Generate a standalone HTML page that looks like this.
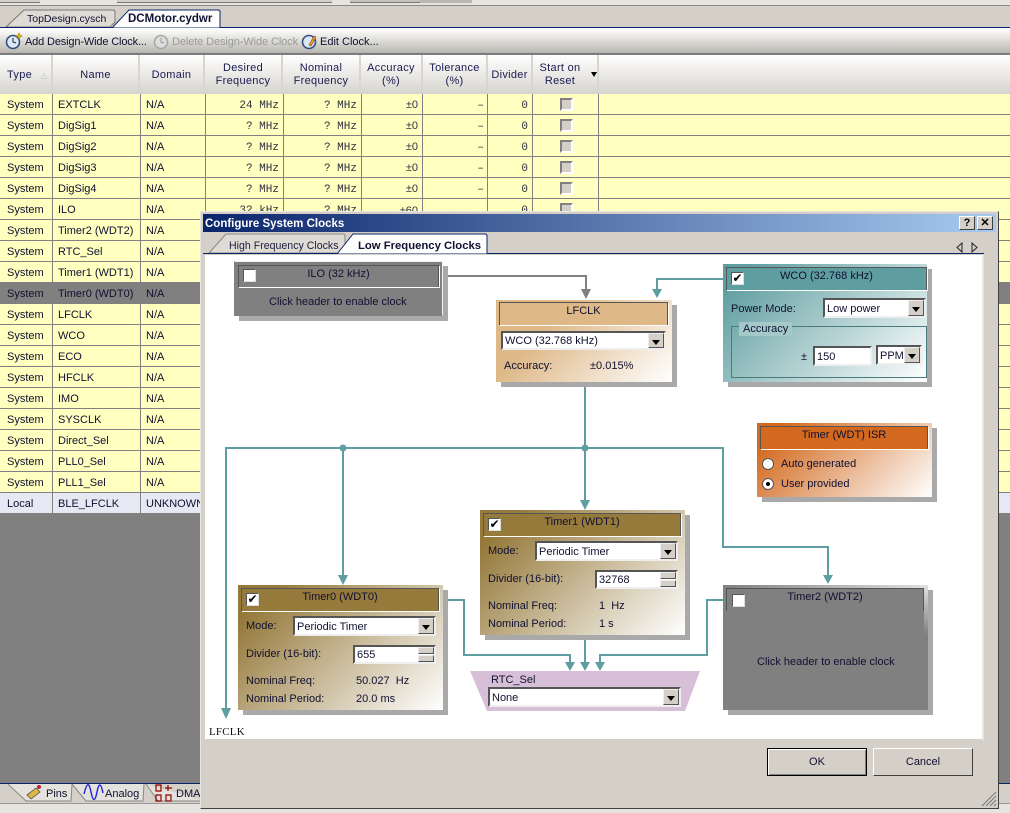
<!DOCTYPE html>
<html><head><meta charset="utf-8"><title>Clocks</title>
<style>
html,body{margin:0;padding:0}
body{width:1010px;height:813px;overflow:hidden;position:relative;background:#808080;font:11px/14px "Liberation Sans",sans-serif;color:#101030}
div,span{position:absolute;box-sizing:border-box;white-space:nowrap}
.r{left:0;width:1010px;height:21px;background:#ffffc0;border-bottom:1px solid #808080}
.t{line-height:14px;margin-top:1px}
.m{font:11px/14px "Liberation Mono",monospace;color:#303040;top:5px;text-align:right}
.hd{top:55px;height:39px;color:#1a1a50;text-align:center;line-height:13px;letter-spacing:.3px;background:linear-gradient(#fff,#d6d4ce);border-right:2px solid #d8d6d0}
.cb{left:560px;top:5px;width:13px;height:13px;background:#d4d0c8;border:2px solid;border-color:#808080 #fff #fff #808080}
.node{box-shadow:5px 5px 0 #a9a9a9}
.hdr{border:1px solid #555;border-bottom:0;box-shadow:1px 1px 0 #fff;text-align:center;line-height:17px;color:#101030}
.ck{width:13px;height:13px;background:#fff;border:1px solid;border-color:#555 #ddd #ddd #555}
.cmb{background:#fff;border:2px solid;border-color:#555 #eee #eee #555;line-height:19px;padding-left:2px;color:#101030}
.ar{right:0;top:0;bottom:0;width:16px;background:#d4d0c8;border:1px solid;border-color:#eee #555 #555 #eee}
.ar:after{content:"";position:absolute;left:3px;top:6px;border:4px solid transparent;border-top:5px solid #000;border-bottom:0}
.spn{position:absolute;right:0;width:16px;height:7px;background:#d4d0c8;border:1px solid;border-color:#eee #555 #555 #eee}
.btn{top:748px;height:28px;width:100px;background:#d4d0c8;text-align:center;line-height:26px;border:1px solid;border-color:#fff #404040 #404040 #fff;color:#101030}
</style></head><body>

<!-- top -->
<div style="left:0;top:0;width:1010px;height:6px;background:#e6e4de;border-bottom:1px solid #8a8a86"></div>
<div style="left:0;top:0;width:40px;height:3px;background:#d4d0c8;border-bottom:1px solid #777"></div>
<div style="left:117px;top:0;width:215px;height:3px;background:#d4d0c8;border-bottom:1px solid #777"></div>
<div style="left:350px;top:0;width:75px;height:3px;background:#c4c1ba;border-bottom:1px solid #777"></div>
<div style="left:420px;top:0;width:52px;height:3px;background:#b8b6b0"></div>
<div style="left:0;top:6px;width:1010px;height:21px;background:#d4d0c8"></div>
<svg style="position:absolute;left:0;top:0" width="240" height="30">
<path d="M6 27 L24 10 H113 Q115 10 115 12 V22 L110 27Z" fill="#dedbd4" stroke="#777" stroke-width="1"/>
<path d="M112 28 L129 10 H218 Q220 10 220 12 V28Z" fill="#fff" stroke="#0a246a" stroke-width="1"/>
</svg>
<div style="left:0;top:27px;width:112px;height:1px;background:#0a246a"></div>
<div style="left:220px;top:27px;width:790px;height:1px;background:#0a246a"></div>
<div class="t" style="left:27px;top:11px;color:#101030;font-size:10.500px">TopDesign.cysch</div>
<div class="t" style="left:128px;top:11px;font-weight:bold;font-size:11.500px;color:#101030">DCMotor.cydwr</div>
<div style="left:0;top:28px;width:1010px;height:26px;background:linear-gradient(#fff 0%,#f0efec 25%,#b8b6b0 100%);border-bottom:1px solid #777"></div>
<svg style="position:absolute;left:0;top:28px" width="330" height="26">
<circle cx="13" cy="14" r="6.500" fill="#dce6f5" stroke="#34507e" stroke-width="1.600"/><path d="M13 10v4l3 1" stroke="#223" fill="none"/><path d="M19 5l1 2 2 1-2 1-1 2-1-2-2-1 2-1z" fill="#e8c020" stroke="#a08010" stroke-width=".6"/>
<circle cx="161" cy="14" r="6.500" fill="#ddd" stroke="#a8a8a8" stroke-width="1.600"/><path d="M161 10v4l3 1" stroke="#999" fill="none"/>
<circle cx="309" cy="14" r="6.500" fill="#dce6f5" stroke="#34507e" stroke-width="1.600"/><path d="M309 17l5-9 2 1-5 9z" fill="#f0a030" stroke="#804010" stroke-width=".6"/>
</svg>
<div class="t" style="left:25px;top:34px;color:#101030;letter-spacing:-.15px">Add Design-Wide Clock...</div>
<div class="t" style="left:172px;top:34px;color:#9a9a98;letter-spacing:-.1px">Delete Design-Wide Clock</div>
<div class="t" style="left:320px;top:34px;color:#101030">Edit Clock...</div>

<!-- table header -->
<div class="hd" style="left:0;width:53px;line-height:40px;text-align:left;padding-left:7px">Type</div>
<div class="t" style="left:41px;top:68px;font-size:8px;color:#bbb">△</div>
<div class="hd" style="left:53px;width:87px;line-height:40px">Name</div>
<div class="hd" style="left:140px;width:65px;line-height:40px">Domain</div>
<div class="hd" style="left:205px;width:78px;padding-top:7px">Desired<br>Frequency</div>
<div class="hd" style="left:283px;width:78px;padding-top:7px">Nominal<br>Frequency</div>
<div class="hd" style="left:361px;width:62px;padding-top:7px">Accuracy<br>(%)</div>
<div class="hd" style="left:423px;width:65px;padding-top:7px">Tolerance<br>(%)</div>
<div class="hd" style="left:488px;width:45px;line-height:40px">Divider</div>
<div class="hd" style="left:533px;width:66px;padding:7px 10px 0 0;">Start on<br>Reset</div>
<div class="hd" style="left:599px;width:411px;border:0"></div>
<div style="left:591px;top:72px;border:3.500px solid transparent;border-top:5px solid #000;border-bottom:0"></div>

<!-- rows -->
<div id="rows" style="left:0;top:94px;width:1010px;height:420px">
<div class="r" style="top:0"><div class="t" style="left:7px;top:3px">System</div><div class="t" style="left:58px;top:3px">EXTCLK</div><div class="t" style="left:146px;top:3px">N/A</div><div class="m" style="left:205px;width:74px">24 MHz</div><div class="m" style="left:283px;width:74px">? MHz</div></div>
<div class="r" style="top:21px"><div class="t" style="left:7px;top:3px">System</div><div class="t" style="left:58px;top:3px">DigSig1</div><div class="t" style="left:146px;top:3px">N/A</div><div class="m" style="left:205px;width:74px">? MHz</div><div class="m" style="left:283px;width:74px">? MHz</div></div>
<div class="r" style="top:42px"><div class="t" style="left:7px;top:3px">System</div><div class="t" style="left:58px;top:3px">DigSig2</div><div class="t" style="left:146px;top:3px">N/A</div><div class="m" style="left:205px;width:74px">? MHz</div><div class="m" style="left:283px;width:74px">? MHz</div></div>
<div class="r" style="top:63px"><div class="t" style="left:7px;top:3px">System</div><div class="t" style="left:58px;top:3px">DigSig3</div><div class="t" style="left:146px;top:3px">N/A</div><div class="m" style="left:205px;width:74px">? MHz</div><div class="m" style="left:283px;width:74px">? MHz</div></div>
<div class="r" style="top:84px"><div class="t" style="left:7px;top:3px">System</div><div class="t" style="left:58px;top:3px">DigSig4</div><div class="t" style="left:146px;top:3px">N/A</div><div class="m" style="left:205px;width:74px">? MHz</div><div class="m" style="left:283px;width:74px">? MHz</div></div>
<div class="r" style="top:105px"><div class="t" style="left:7px;top:3px">System</div><div class="t" style="left:58px;top:3px">ILO</div><div class="t" style="left:146px;top:3px">N/A</div><div class="m" style="left:205px;width:74px">32 kHz</div><div class="m" style="left:283px;width:74px">? MHz</div><div class="m" style="left:361px;width:57px;font:11px/14px 'Liberation Sans',sans-serif">±60</div><div class="m" style="left:488px;width:40px">0</div></div>
<div class="r" style="top:126px"><div class="t" style="left:7px;top:3px">System</div><div class="t" style="left:58px;top:3px">Timer2 (WDT2)</div><div class="t" style="left:146px;top:3px">N/A</div></div>
<div class="r" style="top:147px"><div class="t" style="left:7px;top:3px">System</div><div class="t" style="left:58px;top:3px">RTC_Sel</div><div class="t" style="left:146px;top:3px">N/A</div></div>
<div class="r" style="top:168px"><div class="t" style="left:7px;top:3px">System</div><div class="t" style="left:58px;top:3px">Timer1 (WDT1)</div><div class="t" style="left:146px;top:3px">N/A</div></div>
<div class="r" style="top:189px;background:#808080"><div class="t" style="left:7px;top:3px">System</div><div class="t" style="left:58px;top:3px">Timer0 (WDT0)</div><div class="t" style="left:146px;top:3px">N/A</div></div>
<div class="r" style="top:210px"><div class="t" style="left:7px;top:3px">System</div><div class="t" style="left:58px;top:3px">LFCLK</div><div class="t" style="left:146px;top:3px">N/A</div></div>
<div class="r" style="top:231px"><div class="t" style="left:7px;top:3px">System</div><div class="t" style="left:58px;top:3px">WCO</div><div class="t" style="left:146px;top:3px">N/A</div></div>
<div class="r" style="top:252px"><div class="t" style="left:7px;top:3px">System</div><div class="t" style="left:58px;top:3px">ECO</div><div class="t" style="left:146px;top:3px">N/A</div></div>
<div class="r" style="top:273px"><div class="t" style="left:7px;top:3px">System</div><div class="t" style="left:58px;top:3px">HFCLK</div><div class="t" style="left:146px;top:3px">N/A</div></div>
<div class="r" style="top:294px"><div class="t" style="left:7px;top:3px">System</div><div class="t" style="left:58px;top:3px">IMO</div><div class="t" style="left:146px;top:3px">N/A</div></div>
<div class="r" style="top:315px"><div class="t" style="left:7px;top:3px">System</div><div class="t" style="left:58px;top:3px">SYSCLK</div><div class="t" style="left:146px;top:3px">N/A</div></div>
<div class="r" style="top:336px"><div class="t" style="left:7px;top:3px">System</div><div class="t" style="left:58px;top:3px">Direct_Sel</div><div class="t" style="left:146px;top:3px">N/A</div></div>
<div class="r" style="top:357px"><div class="t" style="left:7px;top:3px">System</div><div class="t" style="left:58px;top:3px">PLL0_Sel</div><div class="t" style="left:146px;top:3px">N/A</div></div>
<div class="r" style="top:378px"><div class="t" style="left:7px;top:3px">System</div><div class="t" style="left:58px;top:3px">PLL1_Sel</div><div class="t" style="left:146px;top:3px">N/A</div></div>
<div class="r" style="top:399px;background:#e6e9f3"><div class="t" style="left:7px;top:3px">Local</div><div class="t" style="left:58px;top:3px">BLE_LFCLK</div><div class="t" style="left:146px;top:3px">UNKNOWN</div></div>
</div>
<!-- column lines -->
<div style="left:52px;top:94px;width:1px;height:420px;background:#808080"></div>
<div style="left:140px;top:94px;width:1px;height:420px;background:#808080"></div>
<div style="left:205px;top:94px;width:1px;height:120px;background:#808080"></div>
<div style="left:283px;top:94px;width:1px;height:120px;background:#808080"></div>
<div style="left:361px;top:94px;width:1px;height:120px;background:#808080"></div>
<div style="left:422px;top:94px;width:1px;height:120px;background:#808080"></div>
<div style="left:487px;top:94px;width:1px;height:120px;background:#808080"></div>
<div style="left:532px;top:94px;width:1px;height:120px;background:#808080"></div>
<div style="left:598px;top:94px;width:1px;height:120px;background:#808080"></div>
<!-- accuracy/tolerance/divider/check cols -->
<div class="m" style="left:361px;width:57px;top:98px;font:11px/14px 'Liberation Sans',sans-serif">±0</div><div class="m" style="left:423px;width:61px;top:99px">–</div><div class="m" style="left:488px;width:40px;top:99px">0</div><div class="cb" style="top:98px"></div>
<div class="m" style="left:361px;width:57px;top:119px;font:11px/14px 'Liberation Sans',sans-serif">±0</div><div class="m" style="left:423px;width:61px;top:120px">–</div><div class="m" style="left:488px;width:40px;top:120px">0</div><div class="cb" style="top:119px"></div>
<div class="m" style="left:361px;width:57px;top:140px;font:11px/14px 'Liberation Sans',sans-serif">±0</div><div class="m" style="left:423px;width:61px;top:141px">–</div><div class="m" style="left:488px;width:40px;top:141px">0</div><div class="cb" style="top:140px"></div>
<div class="m" style="left:361px;width:57px;top:161px;font:11px/14px 'Liberation Sans',sans-serif">±0</div><div class="m" style="left:423px;width:61px;top:162px">–</div><div class="m" style="left:488px;width:40px;top:162px">0</div><div class="cb" style="top:161px"></div>
<div class="m" style="left:361px;width:57px;top:182px;font:11px/14px 'Liberation Sans',sans-serif">±0</div><div class="m" style="left:423px;width:61px;top:183px">–</div><div class="m" style="left:488px;width:40px;top:183px">0</div><div class="cb" style="top:182px"></div>
<div class="cb" style="top:203px"></div>

<!-- bottom tabs -->
<div style="left:0;top:783px;width:1010px;height:1px;background:#0a246a"></div>
<div style="left:0;top:784px;width:1010px;height:19px;background:#d4d0c8"></div>
<div style="left:0;top:803px;width:1010px;height:10px;background:#e6e4de;border-top:1px solid #999"></div>
<svg style="position:absolute;left:0;top:784px" width="205" height="20">
<path d="M8 0 L26 17 H71 L72 0M72 0 L86 17 H143 L144 0M146 0 L158 17 H205" fill="#e4e2dc" stroke="#888"/>
<path d="M27 11l9-7 4 4-9 7z" fill="#e0b840" stroke="#555" stroke-width=".8"/><circle cx="39" cy="3" r="2" fill="#c02030"/>
<path d="M84 10c3-12 5-12 7-2s4 10 6 0 4-9 6 1" fill="none" stroke="#2020e0" stroke-width="1.400"/>
<path d="M156 1h5v6h-5zM156 11h5v6h-5zM165 4h7M168 1v6M166 11h5v6h-5z" fill="none" stroke="#900000" stroke-width="1.200"/>
</svg>
<div class="t" style="left:46px;top:786px;color:#101030">Pins</div>
<div class="t" style="left:105px;top:786px;color:#101030">Analog</div>
<div class="t" style="left:176px;top:786px;color:#101030">DMA</div>

<!-- dialog -->
<div style="left:200px;top:211px;width:799px;height:598px;background:#d4d0c8;border:1px solid;border-color:#e8e6e0 #404040 #404040 #e8e6e0"></div>
<div style="left:203px;top:214px;width:793px;height:18px;background:linear-gradient(90deg,#0a246a,#a6caf0)"></div>
<div class="t" style="left:205px;top:216px;color:#fff;font-weight:bold;font-size:11.500px">Configure System Clocks</div>
<div style="left:959px;top:216px;width:16px;height:14px;background:#d4d0c8;border:1px solid;border-color:#fff #404040 #404040 #fff;text-align:center;font:bold 11px/12px 'Liberation Sans',sans-serif;color:#000">?</div>
<div style="left:977px;top:216px;width:16px;height:14px;background:#d4d0c8;border:1px solid;border-color:#fff #404040 #404040 #fff;text-align:center;font:bold 11px/12px 'Liberation Sans',sans-serif;color:#000">✕</div>
<svg style="position:absolute;left:200px;top:232px" width="785" height="24">
<path d="M9 21 L26 2 H143 Q145 2 145 4 V15 L138 21Z" fill="#dedbd4" stroke="#888"/>
<path d="M137 22 L153 2 H285 Q287 2 287 4 V22Z" fill="#fff" stroke="#0a246a"/>
<path d="M3 21.500H137M287 21.500H784" stroke="#0a246a" fill="none"/>
<path d="M762 11l-5 4.500 5 4.500zM772 11l5 4.500-5 4.500z" fill="none" stroke="#222"/>
</svg>
<div class="t" style="left:229px;top:238px;color:#202040;font-size:10.600px">High Frequency Clocks</div>
<div class="t" style="left:358px;top:238px;font-weight:bold;font-size:11.300px;color:#101030">Low Frequency Clocks</div>
<div style="left:204px;top:254px;width:780px;height:487px;background:#fff;border:1px solid #d4d0c8;border-right:2px solid #e8e6e0;border-bottom:2px solid #d4d0c8"></div>

<!-- connectors -->
<svg style="position:absolute;left:0;top:0" width="1010" height="813" fill="none">
<g stroke="#5f9ea0" stroke-width="2">
<path d="M724 279H657V292"/>
<path d="M585 382V504"/>
<path d="M226 710V448H723V547H828V577"/>
<path d="M343 448V578"/>
<path d="M444 600H464V655H570V664"/>
<path d="M585 635V665"/>
<path d="M724 600H707V655H600V664"/>
</g>
<path d="M444 276H586V292" stroke="#808080" stroke-width="2"/>
<g fill="#5f9ea0">
<path d="M652 289h10l-5 9z"/>
<path d="M580 500h10l-5 10z"/>
<path d="M221 708h10l-5 11z"/>
<path d="M338 575h10l-5 10z"/>
<path d="M823 575h10l-5 9z"/>
<path d="M565 662h10l-5 9z"/>
<path d="M580 662h10l-5 9z"/>
<path d="M595 662h10l-5 9z"/>
<circle cx="585" cy="448" r="3.500"/><circle cx="343" cy="448" r="3.500"/>
</g>
<path d="M581 289h10l-5 10z" fill="#808080"/>
<path d="M470 671H700L685 711H487Z" fill="#d8bfd8"/>
</svg>

<!-- ILO -->
<div class="node" style="left:234px;top:261px;width:209px;height:55px;background:#808080;border:1px solid;border-color:#f2f2f2 #f2f2f2 #808080 #808080"></div>
<div class="hdr" style="left:238px;top:265px;width:201px;height:22px;background:#808080">ILO (32 kHz)</div>
<div class="ck" style="left:243px;top:269px"></div>
<div class="t" style="left:269px;top:294px">Click header to enable clock</div>

<!-- LFCLK -->
<div class="node" style="left:496px;top:300px;width:176px;height:82px;background:linear-gradient(135deg,#deb887 30%,#fff 100%)"></div>
<div class="hdr" style="left:499px;top:302px;width:169px;height:23px;background:#deb887">LFCLK</div>
<div class="cmb" style="left:501px;top:331px;width:165px;height:19px;line-height:17px">WCO (32.768 kHz)<div class="ar"></div></div>
<div class="t" style="left:504px;top:358px">Accuracy:</div>
<div class="t" style="left:590px;top:358px">±0.015%</div>

<!-- WCO -->
<div class="node" style="left:723px;top:264px;width:204px;height:118px;background:linear-gradient(135deg,#5f9ea0 8%,#fff 100%)"></div>
<div class="hdr" style="left:726px;top:267px;width:201px;height:23px;background:#5f9ea0">WCO (32.768 kHz)</div>
<div class="ck" style="left:731px;top:272px;font:bold 12px/11px 'DejaVu Sans',sans-serif;color:#000;text-align:center">✔</div>
<div class="t" style="left:731px;top:301px">Power Mode:</div>
<div class="cmb" style="left:823px;top:298px;width:103px;height:20px">Low power<div class="ar"></div></div>
<div style="left:731px;top:326px;width:196px;height:52px;border:1px solid #4a7a7c"></div>
<div class="t" style="left:739px;top:321px;padding:0 4px;background:#a5c8c9">Accuracy</div>
<div class="t" style="left:801px;top:349px">±</div>
<div class="cmb" style="left:813px;top:346px;width:59px;height:20px">150</div>
<div class="cmb" style="left:876px;top:345px;width:46px;height:20px">PPM<div class="ar"></div></div>

<!-- ISR -->
<div class="node" style="left:757px;top:423px;width:175px;height:74px;background:linear-gradient(135deg,#d2691e 10%,#fff 100%)"></div>
<div class="hdr" style="left:760px;top:426px;width:168px;height:23px;background:#d2691e">Timer (WDT) ISR</div>
<div style="left:762px;top:458px;width:12px;height:12px;border-radius:50%;background:#fff;border:1px solid #555"></div>
<div class="t" style="left:781px;top:456px">Auto generated</div>
<div style="left:762px;top:478px;width:12px;height:12px;border-radius:50%;background:#fff;border:1px solid #555"></div>
<div style="left:766px;top:482px;width:4px;height:4px;border-radius:50%;background:#000"></div>
<div class="t" style="left:781px;top:476px">User provided</div>

<!-- Timer1 -->
<div class="node" style="left:480px;top:510px;width:205px;height:125px;background:linear-gradient(135deg,#967a3c 12%,#fff 100%)"></div>
<div class="hdr" style="left:483px;top:513px;width:198px;height:23px;background:#967a3c">Timer1 (WDT1)</div>
<div class="ck" style="left:488px;top:518px;font:bold 12px/11px 'DejaVu Sans',sans-serif;color:#000;text-align:center">✔</div>
<div class="t" style="left:488px;top:543px">Mode:</div>
<div class="cmb" style="left:535px;top:541px;width:143px;height:20px">Periodic Timer<div class="ar"></div></div>
<div class="t" style="left:488px;top:571px">Divider (16-bit):</div>
<div class="cmb" style="left:595px;top:570px;width:83px;height:19px;line-height:17px">32768<div class="spn" style="top:0"></div><div class="spn" style="top:8px"></div></div>
<div class="t" style="left:488px;top:598px">Nominal Freq:</div><div class="t" style="left:599px;top:598px">1&nbsp; Hz</div>
<div class="t" style="left:488px;top:616px">Nominal Period:</div><div class="t" style="left:599px;top:616px">1 s</div>

<!-- Timer0 -->
<div class="node" style="left:238px;top:585px;width:205px;height:125px;background:linear-gradient(135deg,#967a3c 12%,#fff 100%)"></div>
<div class="hdr" style="left:241px;top:588px;width:198px;height:23px;background:#967a3c">Timer0 (WDT0)</div>
<div class="ck" style="left:246px;top:593px;font:bold 12px/11px 'DejaVu Sans',sans-serif;color:#000;text-align:center">✔</div>
<div class="t" style="left:246px;top:618px">Mode:</div>
<div class="cmb" style="left:293px;top:616px;width:143px;height:20px">Periodic Timer<div class="ar"></div></div>
<div class="t" style="left:246px;top:646px">Divider (16-bit):</div>
<div class="cmb" style="left:353px;top:645px;width:83px;height:19px;line-height:17px">655<div class="spn" style="top:0"></div><div class="spn" style="top:8px"></div></div>
<div class="t" style="left:246px;top:673px">Nominal Freq:</div><div class="t" style="left:356px;top:673px">50.027&nbsp; Hz</div>
<div class="t" style="left:246px;top:691px">Nominal Period:</div><div class="t" style="left:356px;top:691px">20.0 ms</div>

<!-- Timer2 -->
<div class="node" style="left:723px;top:585px;width:205px;height:125px;background:#808080"></div>
<div style="left:723px;top:585px;width:205px;height:3px;background:linear-gradient(90deg,#808080,#e0e0e0)"></div>
<div style="left:924px;top:585px;width:4px;height:50px;background:linear-gradient(#e0e0e0,#808080)"></div>
<div class="hdr" style="left:726px;top:588px;width:198px;height:23px;background:#808080;box-shadow:none">Timer2 (WDT2)</div>
<div class="ck" style="left:732px;top:594px"></div>
<div class="t" style="left:757px;top:654px">Click header to enable clock</div>

<!-- RTC -->
<div class="t" style="left:491px;top:672px">RTC_Sel</div>
<div class="cmb" style="left:488px;top:687px;width:193px;height:20px">None<div class="ar"></div></div>

<div style="left:209px;top:725px;font:11px/14px 'Liberation Serif',serif;letter-spacing:.2px;color:#101010">LFCLK</div>

<div class="btn" style="left:767px;border:1px solid #000;box-shadow:inset 1px 1px 0 #fff,inset -1px -1px 0 #808080">OK</div>
<div class="btn" style="left:873px">Cancel</div>
<svg style="position:absolute;left:980px;top:790px" width="18" height="18" stroke="#777" fill="none"><path d="M2 16L16 2M6 16L16 6M10 16L16 10M14 16L16 14"/></svg>
</body></html>
